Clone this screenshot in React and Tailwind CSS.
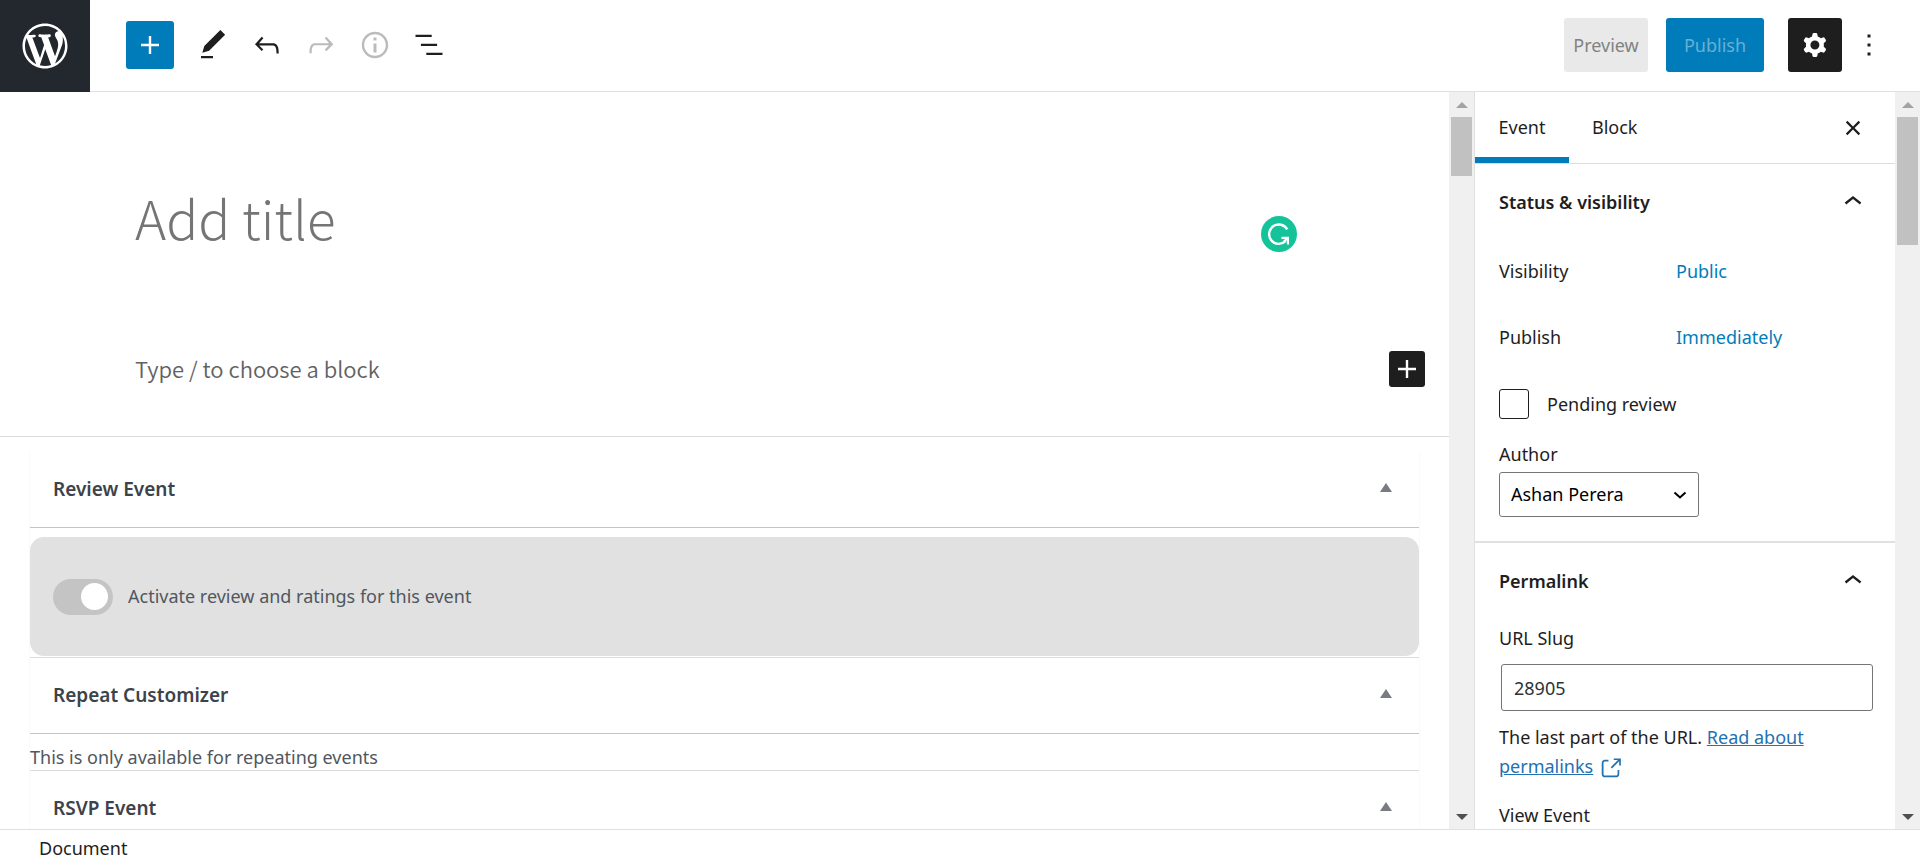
import React from "react";

const ICONS = {
  plus: "M18 11.2h-5.2V6h-1.6v5.2H6v1.6h5.2V18h1.6v-5.2H18z",
  edit: "M20.1 5.1L16.9 2 6.2 12.7l-1.3 4.4 4.5-1.3L20.1 5.1zM4 20.8h8v-1.5H4v1.5z",
  undo: "M18.3 11.7c-.6-.6-1.4-.9-2.3-.9H6.7l2.9-3.3-1.1-1-4.5 5L8.5 16l1-1-2.7-2.7H16c.5 0 .9.2 1.3.5 1 1 1 3.4 1 4.5v.3h1.5v-.2c0-1.5 0-4.3-1.5-5.7z",
  redo: "M15.6 6.5l-1.1 1 2.9 3.3H8c-.9 0-1.7.3-2.3.9-1.4 1.5-1.4 4.2-1.4 5.6v.2h1.5v-.3c0-1.1 0-3.5 1-4.5.3-.3.7-.5 1.3-.5h9.2L14.5 15l1.1 1.1 4.6-4.6-4.6-5z",
  info: "M12 3.2c-4.8 0-8.8 3.9-8.8 8.8 0 4.8 3.9 8.8 8.8 8.8 4.8 0 8.8-3.9 8.8-8.8 0-4.8-4-8.8-8.8-8.8zm0 16c-4 0-7.2-3.3-7.2-7.2C4.8 8 8 4.8 12 4.8s7.2 3.3 7.2 7.2c0 4-3.2 7.2-7.2 7.2zM11 17h2v-6h-2v6zm0-8h2V7h-2v2z",
  list: "M13.8 5.2H3v1.5h10.8V5.2zm-3.6 12v1.5H21v-1.5H10.2zm7.2-6H6.6v1.5h10.8v-1.5z",
  cog: "M10.289 4.836A1 1 0 0111.275 4h1.306a1 1 0 01.987.836l.244 1.466c.787.26 1.503.679 2.108 1.218l1.393-.522a1 1 0 011.216.437l.653 1.13a1 1 0 01-.23 1.273l-1.148.944a6.025 6.025 0 010 2.435l1.149.946a1 1 0 01.23 1.272l-.653 1.13a1 1 0 01-1.216.437l-1.394-.522c-.605.54-1.32.958-2.108 1.218l-.244 1.466a1 1 0 01-.987.836h-1.306a1 1 0 01-.986-.836l-.244-1.466a5.995 5.995 0 01-2.108-1.218l-1.394.522a1 1 0 01-1.217-.436l-.653-1.131a1 1 0 01.23-1.272l1.149-.946a6.026 6.026 0 010-2.435l-1.148-.944a1 1 0 01-.23-1.272l.653-1.131a1 1 0 011.217-.437l1.393.522a5.994 5.994 0 012.108-1.218l.244-1.466zM14.929 12a3 3 0 11-6 0 3 3 0 016 0z",
  more: "M13 19h-2v-2h2v2zm0-6h-2v-2h2v2zm0-6h-2V5h2v2z",
  close: "M12 13.06l3.712 3.713 1.061-1.06L13.061 12l3.712-3.712-1.06-1.06L12 10.938 8.288 7.227l-1.061 1.06L10.939 12l-3.712 3.712 1.06 1.061L12 13.061z",
  chevron: "M6.5 12.4L12 8l5.5 4.4-.9 1.2L12 10l-4.5 3.6-1-1.2z",
  external: "M18.2 17c0 .7-.6 1.2-1.2 1.2H7c-.7 0-1.2-.6-1.2-1.2V7c0-.7.6-1.2 1.2-1.2h3.2V4.2H7C5.5 4.2 4.2 5.5 4.2 7v10c0 1.5 1.2 2.8 2.8 2.8h10c1.5 0 2.8-1.2 2.8-2.8v-3.6h-1.5V17zM14.9 3v1.5h3.7l-6.4 6.4 1.1 1.1 6.4-6.4v3.7h1.5V3h-6.3z",
};

function Icon({ name, className = "size-9" }) {
  return (
    <svg viewBox="0 0 24 24" fill="currentColor" fillRule="evenodd" aria-hidden="true" className={className}>
      <path d={ICONS[name]} />
    </svg>
  );
}

function ToolButton({ icon, label, disabled }) {
  return (
    <button aria-label={label} disabled={disabled} className="flex h-[54px] w-[54px] items-center justify-center disabled:text-[#bbbbbb]">
      <Icon name={icon} />
    </button>
  );
}

function Header() {
  return (
    <header className="flex h-[92px] shrink-0">
      <a href="#dashboard" aria-label="View posts" className="flex w-[90px] items-center justify-center bg-[#23282e] text-white">
        <svg viewBox="-2 -2 24 24" fill="currentColor" aria-hidden="true" className="size-[54px]">
          <path d="M20 10c0-5.51-4.49-10-10-10C4.48 0 0 4.49 0 10c0 5.52 4.48 10 10 10 5.51 0 10-4.48 10-10zM7.78 15.37L4.37 6.22c.55-.02 1.17-.08 1.17-.08.5-.06.44-1.13-.06-1.11 0 0-1.45.11-2.37.11-.18 0-.37 0-.58-.01C4.12 2.69 6.87 1.11 10 1.11c2.33 0 4.45.87 6.05 2.34-.68-.11-1.65.39-1.65 1.58 0 .74.45 1.36.9 2.1.35.61.55 1.36.55 2.46 0 1.49-1.4 5-1.4 5l-3.03-8.37c.54-.02.82-.17.82-.17.5-.05.44-1.25-.06-1.22 0 0-1.44.12-2.38.12-.87 0-2.33-.12-2.33-.12-.5-.03-.56 1.2-.06 1.22l.92.08 1.26 3.41zM17.41 10c.24-.64.74-1.87.43-4.25.7 1.29 1.05 2.71 1.05 4.25 0 3.29-1.73 6.24-4.4 7.78.97-2.59 1.94-5.2 2.92-7.78zM6.1 18.09C3.12 16.65 1.11 13.53 1.11 10c0-1.3.23-2.48.72-3.59C3.25 10.3 4.67 14.2 6.1 18.09zm4.03-6.63l2.58 6.98c-.86.29-1.76.45-2.71.45-.79 0-1.57-.11-2.29-.33.81-2.38 1.62-4.74 2.42-7.1z" />
        </svg>
      </a>
      <div className="flex flex-1 items-center justify-between border-b border-[#e0e0e0] pr-[33px] pb-px pl-9">
        <div className="flex items-center">
          <button aria-label="Add block" className="mr-3 flex size-12 items-center justify-center rounded-[3px] bg-[#007cba] text-white">
            <Icon name="plus" />
          </button>
          <ToolButton icon="edit" label="Edit" />
          <ToolButton icon="undo" label="Undo" />
          <ToolButton icon="redo" label="Redo" disabled />
          <ToolButton icon="info" label="Details" disabled />
          <ToolButton icon="list" label="List view" />
        </div>
        <div className="flex items-center">
          <button className="h-[54px] w-[84px] rounded-[3px] bg-[#e9e9e9] text-[#828282]">Preview</button>
          <button className="ml-[18px] h-[54px] w-[98px] rounded-[3px] bg-[#007cba] text-[#66b0d6]">Publish</button>
          <button aria-label="Settings" className="ml-6 flex size-[54px] items-center justify-center rounded-[3px] bg-[#1e1e1e] text-white">
            <Icon name="cog" />
          </button>
          <button aria-label="Options" className="ml-[9px] flex h-[54px] items-center">
            <Icon name="more" />
          </button>
        </div>
      </div>
    </header>
  );
}

function ScrollBar({ thumb }) {
  return (
    <div aria-hidden="true" className="flex w-[25px] shrink-0 flex-col items-center bg-[#f0f0f0]">
      <div className="flex h-[25px] items-center">
        <svg viewBox="0 0 12 6" className="h-[6px] w-3 fill-[#a3a3a3]"><path d="M0 6L6 0l6 6z" /></svg>
      </div>
      <div className={"w-[21px] bg-[#c1c1c1] " + thumb} />
      <div className="mt-auto flex h-[25px] items-center">
        <svg viewBox="0 0 12 6" className="h-[6px] w-3 fill-[#505050]"><path d="M0 0l6 6 6-6z" /></svg>
      </div>
    </div>
  );
}

function MetaBox({ title, children }) {
  return (
    <section>
      <button aria-expanded="true" className="flex h-[75px] w-full items-center justify-between pr-[27px] pl-[23px]">
        <h2 className="text-[19px] font-semibold text-[#3c434a]">{title}</h2>
        <svg viewBox="0 0 12 9" aria-hidden="true" className="mb-1 h-[9px] w-3 fill-[#787c82]"><path d="M0 9L6 0l6 9z" /></svg>
      </button>
      {children}
    </section>
  );
}

function Editor() {
  return (
    <main className="flex min-w-0 flex-1">
      <div className="min-w-0 flex-1 overflow-hidden">
        <div className="relative flex h-[345px] flex-col border-b border-[#dcdcde] pr-6 pl-[135px] font-['Noto_Sans_CJK_SC',sans-serif]">
          <input
            aria-label="Add title"
            placeholder="Add title"
            className="mt-[81px] h-[88px] w-full text-[53px] font-light outline-none placeholder:text-[#757575]"
          />
          <div className="mt-[90px] flex items-center">
            <input
              aria-label="Block content"
              placeholder="Type / to choose a block"
              className="h-9 min-w-0 flex-1 pb-[2px] text-[22px] font-[350] outline-none placeholder:text-[#626262]"
            />
            <button aria-label="Add block" className="flex size-9 items-center justify-center rounded-[3px] bg-[#1e1e1e] text-white">
              <Icon name="plus" />
            </button>
          </div>
          <svg viewBox="0 0 36 36" aria-label="Grammarly" className="absolute top-[124px] right-[152px] size-9">
            <circle cx="18" cy="18" r="18" fill="#15c39a" />
            <path d="M26.3 13.4A9.7 9.7 0 1 0 24.5 25.2" fill="none" stroke="#fff" strokeWidth="2.4" />
            <path d="M20.5 21.9h6.4V28.6M26.4 22.2L22.8 25.8" fill="none" stroke="#fff" strokeWidth="2.2" />
          </svg>
        </div>
        <div className="mx-[29px] mt-[15px] border-x border-[#fafafa] text-[#50575e]">
          <MetaBox title="Review Event">
            <div className="border-y border-t-[#c3c4c7] border-b-[#dcdcde] pt-[9px] pb-px">
              <label className="flex h-[119px] items-center gap-[15px] rounded-[14px] bg-[#e1e1e1] px-[23px]">
                <input
                  type="checkbox"
                  defaultChecked
                  className="flex h-9 w-[60px] appearance-none items-center rounded-full bg-[#c4c4c4] pl-7 before:size-[27px] before:rounded-full before:bg-white"
                />
                Activate review and ratings for this event
              </label>
            </div>
          </MetaBox>
          <MetaBox title="Repeat Customizer">
            <p className="border-y border-t-[#c3c4c7] border-b-[#dcdcde] pt-[10px] leading-[26px]">
              This is only available for repeating events
            </p>
          </MetaBox>
          <MetaBox title="RSVP Event" />
        </div>
      </div>
      <ScrollBar thumb="h-[59px]" />
    </main>
  );
}

function PanelTitle({ children }) {
  return (
    <button aria-expanded="true" className="flex items-center justify-between self-stretch">
      <h2 className="font-semibold">{children}</h2>
      <Icon name="chevron" />
    </button>
  );
}

function Sidebar() {
  return (
    <aside className="flex w-[446px] shrink-0 border-l border-[#e0e0e0]">
      <div className="min-w-0 flex-1 overflow-hidden">
        <div className="flex h-[72px] items-stretch border-b border-[#dddddd] pr-6">
          <button className="w-[94px] border-b-6 border-[#007cba] pt-[6px]">Event</button>
          <button className="px-[23px]">Block</button>
          <button aria-label="Close settings" className="ml-auto">
            <Icon name="close" />
          </button>
        </div>
        <section className="flex flex-col items-start border-b-2 border-[#e0e0e0] px-6 pt-5 pb-6">
          <PanelTitle>Status &amp; visibility</PanelTitle>
          <dl className="mt-9 grid grid-cols-[177px_1fr] gap-y-9 leading-[30px]">
            <dt>Visibility</dt>
            <dd><button className="text-[#007cba]">Public</button></dd>
            <dt>Publish</dt>
            <dd><button className="text-[#007cba]">Immediately</button></dd>
          </dl>
          <label className="mt-[37px] flex items-center gap-[18px]">
            <input type="checkbox" className="size-[30px] appearance-none rounded-[3px] border border-[#1e1e1e]" />
            Pending review
          </label>
          <label htmlFor="author" className="mt-5 leading-[30px]">Author</label>
          <div className="relative mt-[3px] w-[200px]">
            <select id="author" className="h-[45px] w-full appearance-none rounded-[3px] border border-[#757575] px-[11px] text-black">
              <option>Ashan Perera</option>
            </select>
            <svg viewBox="0 0 14 8" aria-hidden="true" className="pointer-events-none absolute top-[19px] right-3 h-2 w-[14px] fill-none stroke-black stroke-2">
              <path d="M1.5 1.5L7 6.5l5.500-5" />
            </svg>
          </div>
        </section>
        <section className="flex flex-col items-start px-6 pt-5">
          <PanelTitle>Permalink</PanelTitle>
          <label htmlFor="slug" className="mt-6 leading-[30px]">URL Slug</label>
          <div className="mt-[11px] -mr-[2px] self-stretch pl-[2px]">
            <input id="slug" defaultValue="28905" className="h-[47px] w-full rounded-[3px] border border-[#757575] px-3 text-[#2c3338]" />
          </div>
          <p className="mt-[12px] leading-[29px]">
            The last part of the URL.{" "}
            <a href="#permalinks" className="text-[#2271b1] underline">
              Read about permalinks
              <Icon name="external" className="ml-1 inline size-[27px] align-middle" />
            </a>
          </p>
          <p className="mt-[18px] leading-[30px]">View Event</p>
        </section>
      </div>
      <ScrollBar thumb="h-32" />
    </aside>
  );
}

export default function App() {
  return (
    <div className="flex h-screen flex-col bg-white font-['Noto_Sans',sans-serif] text-[18px] text-[#1e1e1e]">
      <Header />
      <div className="flex min-h-0 flex-1">
        <Editor />
        <Sidebar />
      </div>
      <footer className="h-9 shrink-0 border-t border-[#e0e0e0] px-[39px] leading-[36px]">Document</footer>
    </div>
  );
}
